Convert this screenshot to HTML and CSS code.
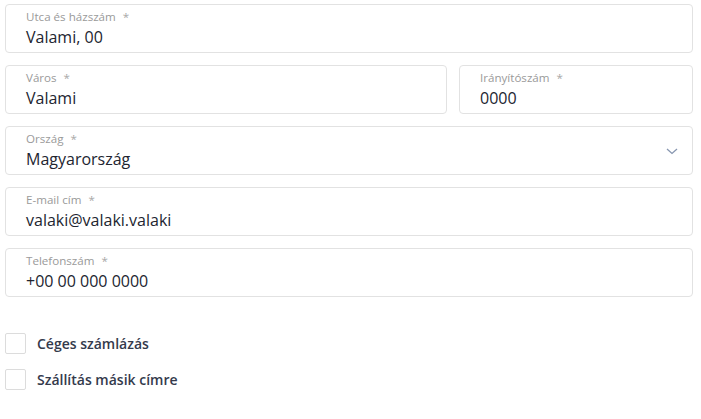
FILE: index.html
```html
<!DOCTYPE html>
<html lang="hu">
<head>
<meta charset="UTF-8">
<meta name="viewport" content="width=device-width, initial-scale=1.0">
<title>Szállítási adatok</title>
<link rel="stylesheet" href="styles.css">
</head>
<body>
    <form class="address-form">
        <div class="field">
            <label class="field-label">Utca és házszám <span class="req">*</span></label>
            <div class="field-value">Valami, 00</div>
        </div>

        <div class="field-row">
            <div class="field">
                <label class="field-label">Város <span class="req">*</span></label>
                <div class="field-value">Valami</div>
            </div>
            <div class="field">
                <label class="field-label">Irányítószám <span class="req">*</span></label>
                <div class="field-value">0000</div>
            </div>
        </div>

        <!-- Country select -->
        <div class="field select">
            <label class="field-label">Ország <span class="req">*</span></label>
            <div class="field-value">Magyarország</div>
            <svg class="chevron" width="12" height="7" viewBox="0 0 12 7">
                <path d="M1 1l5 4.5L11 1" fill="none" stroke="#8796b0" stroke-width="1.3"/>
            </svg>
        </div>

        <div class="field">
            <label class="field-label">E-mail cím <span class="req">*</span></label>
            <div class="field-value">valaki@valaki.valaki</div>
        </div>

        <div class="field">
            <label class="field-label">Telefonszám <span class="req">*</span></label>
            <div class="field-value">+00 00 000 0000</div>
        </div>

        <div class="checks">
            <label class="check"><span class="box"></span>Céges számlázás</label>
            <label class="check"><span class="box"></span>Szállítás másik címre</label>
        </div>
    </form>
</body>
</html>
```

FILE: styles.css
```css
body {
    margin: 0;
    background: white;
    font-family: "Open Sans", "Liberation Sans", sans-serif;
}

.address-form {
    width: 688px;
    padding: 4px 0 0 5px;
    display: flex;
    flex-direction: column;
    gap: 12px;
}

.field-row {
    display: grid;
    grid-template-columns: 1fr 234px;
    gap: 12px;
}

.field {
    position: relative;
    height: 49px;
    box-sizing: border-box;
    border: 1px solid #e2e2e2;
    border-radius: 4px;
    padding: 4px 20px 0 20px;
}

.field-label {
    display: block;
    font-size: 11.6px;
    line-height: 15px;
    color: #9a9a9a;
}

.req {
    margin-left: 4px;
    color: #a8a8a8;
}

.field-value {
    margin-top: 2px;
    font-size: 16px;
    line-height: 22px;
    color: #222530;
}

/* dropdown arrow */
.chevron {
    position: absolute;
    right: 14px;
    top: 21px;
}

.checks {
    margin-top: 24px;
    display: flex;
    flex-direction: column;
    gap: 15px;
}

.check {
    display: flex;
    align-items: center;
    gap: 11px;
    height: 21px;
    font-size: 14px;
    font-weight: 600;
    color: #343a4c;
}

.check .box {
    width: 21px;
    height: 21px;
    box-sizing: border-box;
    border: 1px solid #dcdcdc;
    border-radius: 2px;
}
```
